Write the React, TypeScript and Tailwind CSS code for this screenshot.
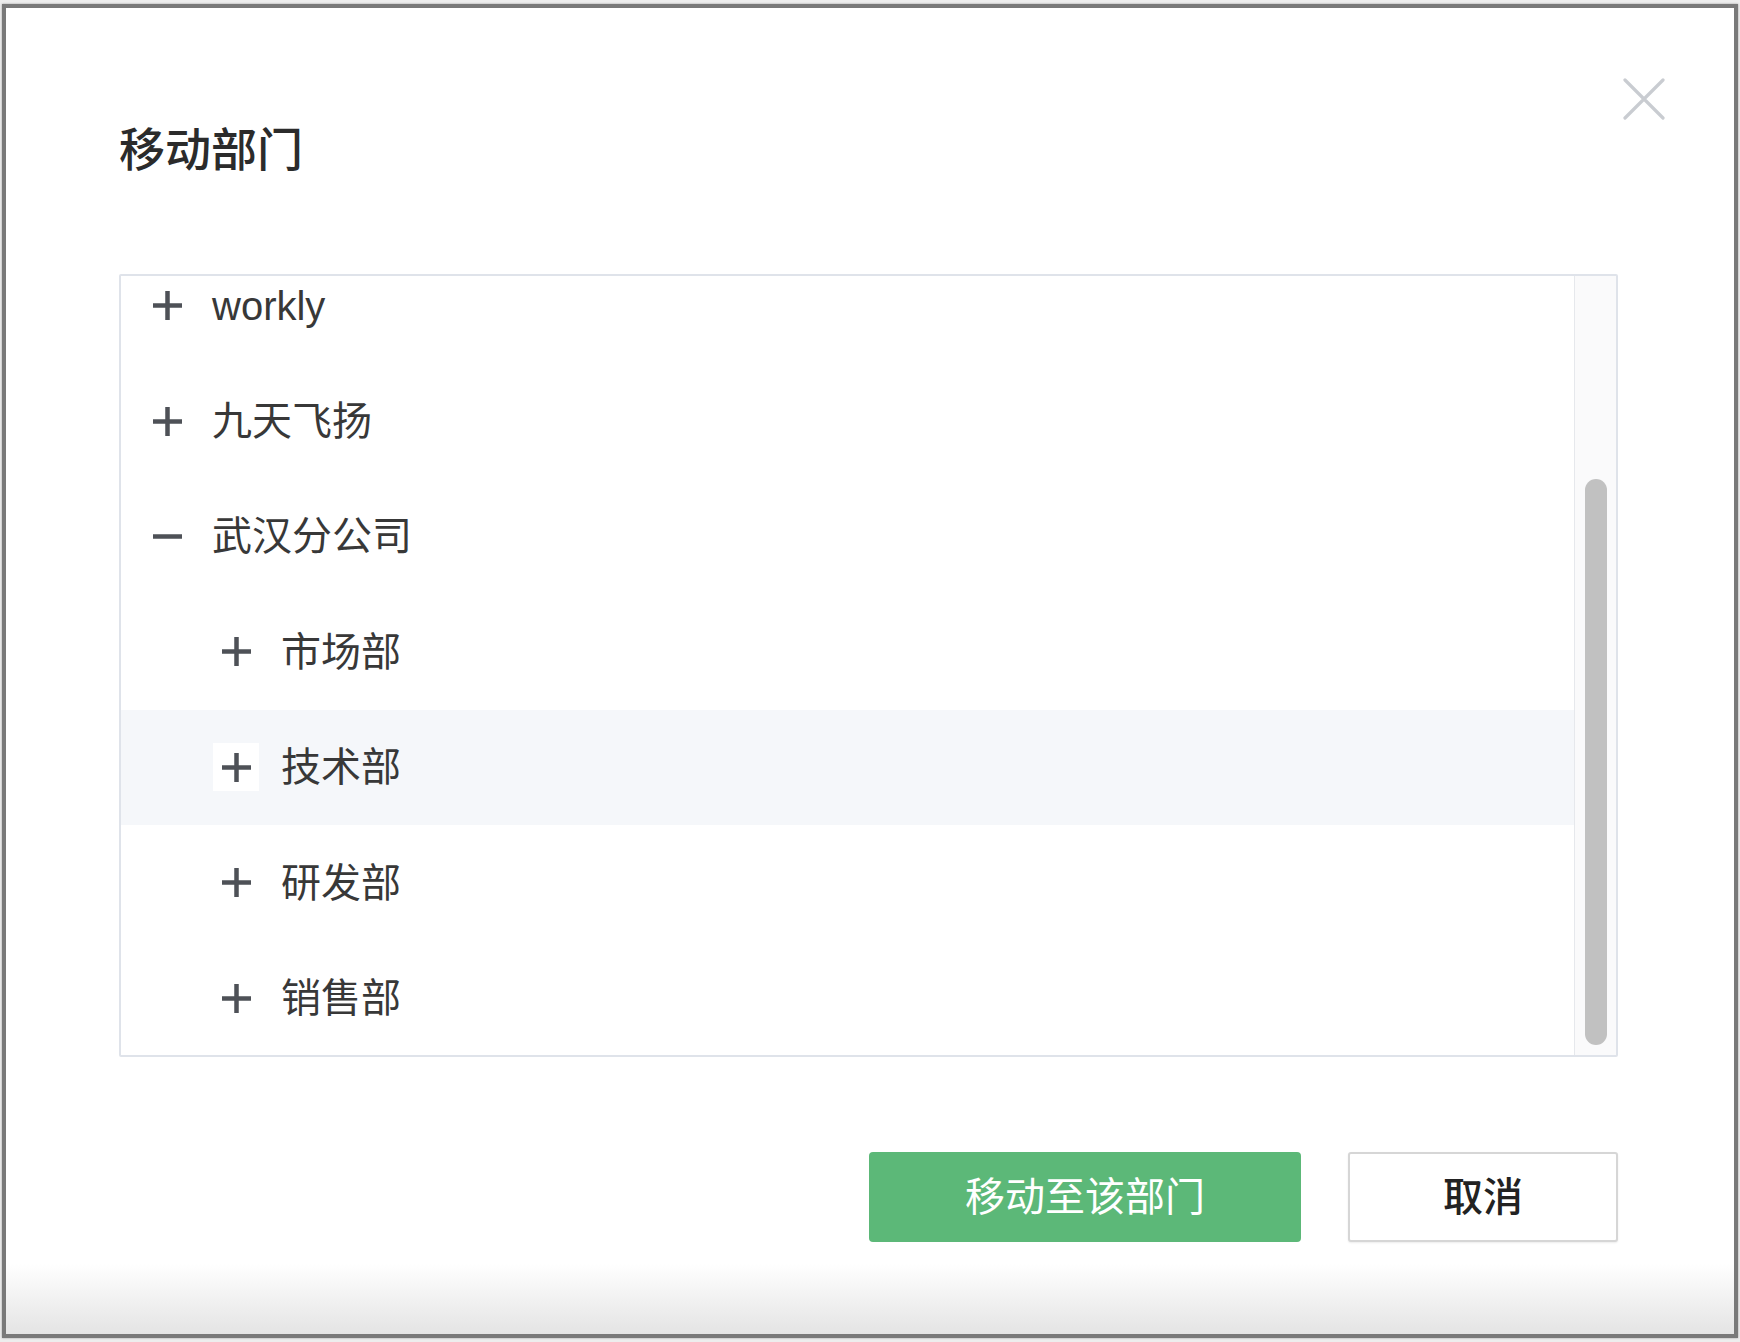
import React from 'react';

interface Dept {
  id: number;
  name: string;
  level: number;
  expanded: boolean;
}

const depts: Dept[] = [
  { id: 1, name: 'workly', level: 0, expanded: false },
  { id: 2, name: '九天飞扬', level: 0, expanded: false },
  { id: 3, name: '武汉分公司', level: 0, expanded: true },
  { id: 4, name: '市场部', level: 1, expanded: false },
  { id: 5, name: '技术部', level: 1, expanded: false },
  { id: 6, name: '研发部', level: 1, expanded: false },
  { id: 7, name: '销售部', level: 1, expanded: false },
];

const font = { fontFamily: '"Liberation Sans", "Noto Sans CJK SC", sans-serif' };

const ToggleIcon: React.FC<{ open: boolean }> = ({ open }) => (
  <svg width="29" height="29" viewBox="0 0 29 29">
    <rect x="0" y="12.25" width="29" height="4.5" fill="#4e5157" />
    {!open && <rect x="12.25" y="0" width="4.5" height="29" fill="#4e5157" />}
  </svg>
);

const App: React.FC = () => {
  const hovered = 5;

  return (
    <div className="w-[1740px] h-[1342px] bg-[#ededed] pt-[4px] pl-[2px]" style={font}>
      <div className="w-[1736px] h-[1334px] border-4 border-[#797979] bg-white flex flex-col shadow-[0_0_2px_rgba(0,0,0,0.35)]">
        <div className="pl-[113px] pr-[116px]">
          {/* header */}
          <div className="flex justify-between items-start">
            <h1 className="mt-[119px] text-[46px] leading-[46px] text-[#2b2b2b] font-medium">移动部门</h1>
            <button className="mt-[70px] -mr-[47px] w-[42px] h-[42px]">
              <svg width="42" height="42" viewBox="0 0 42 42">
                <path d="M2 2 L40 40 M40 2 L2 40" stroke="#c9ccd1" strokeWidth="3.2" strokeLinecap="round" />
              </svg>
            </button>
          </div>

          {/* tree */}
          <div className="mt-[101px] h-[783px] border-2 border-[#dfe3ea] rounded-[2px] flex overflow-hidden">
            <div className="flex-1 overflow-hidden">
              <ul className="-mt-[28px]">
                {depts.map((d) => (
                  <li
                    key={d.id}
                    className={`h-[115.4px] flex items-center ${d.level === 0 ? 'pl-[23px]' : 'pl-[92px]'} ${d.id === hovered ? 'bg-[#f5f7fa]' : ''}`}
                  >
                    <span className={`w-[46px] h-[48px] flex items-center justify-center ${d.id === hovered ? 'bg-white' : ''}`}>
                      <ToggleIcon open={d.expanded} />
                    </span>
                    <span className="ml-[22px] text-[40px] leading-none text-[#383838]">{d.name}</span>
                  </li>
                ))}
              </ul>
            </div>
            <div className="w-[42px] border-l border-[#e6e8ec] bg-[#fafafb] pl-[10px] pt-[203px]">
              <div className="w-[22px] h-[566px] rounded-full bg-[#c1c1c1]" />
            </div>
          </div>

          {/* actions */}
          <div className="mt-[95px] flex justify-end gap-[47px]">
            <button className="w-[432px] h-[90px] rounded-[4px] bg-[#5cb878] text-white text-[40px] leading-none">
              移动至该部门
            </button>
            <button className="w-[270px] h-[90px] rounded-[3px] border-2 border-[#d6d6d6] bg-white text-[#222] text-[40px] leading-none font-medium shadow-[0_1px_2px_rgba(0,0,0,0.08)]">
              取消
            </button>
          </div>
        </div>
        <div className="flex-1" />
        <div className="h-[70px] bg-linear-to-b from-white to-[#e4e4e4]" />
      </div>
    </div>
  );
};

export default App;
